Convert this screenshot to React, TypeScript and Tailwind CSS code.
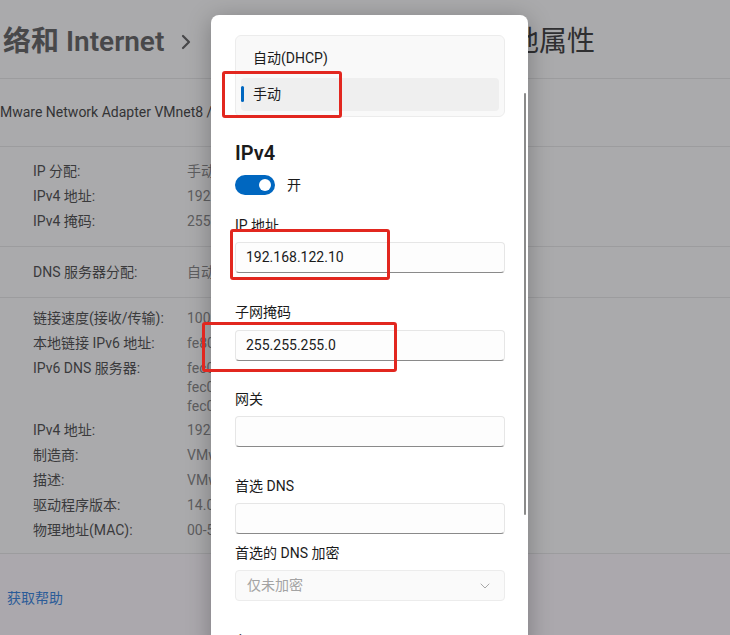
import React from "react";

const font = "font-['Roboto','Noto_Sans_CJK_SC',sans-serif]";

type Row = { label: string; values: string[] };

const sec1: Row[] = [
  { label: "IP 分配:", values: ["手动"] },
  { label: "IPv4 地址:", values: ["192.168.122.10"] },
  { label: "IPv4 掩码:", values: ["255.255.255.0"] },
];
const sec2: Row[] = [{ label: "DNS 服务器分配:", values: ["自动(DHCP)"] }];
const sec3: Row[] = [
  { label: "链接速度(接收/传输):", values: ["100/100 (Mbps)"] },
  { label: "本地链接 IPv6 地址:", values: ["fe80::b4c1:8f2e:1a7d:3c%18"] },
  { label: "IPv6 DNS 服务器:", values: ["fec0:0:0:ffff::1%1", "fec0:0:0:ffff::2%1", "fec0:0:0:ffff::3%1"] },
  { label: "IPv4 地址:", values: ["192.168.122.10"] },
  { label: "制造商:", values: ["VMware, Inc."] },
  { label: "描述:", values: ["VMware Virtual Ethernet Adapter for VMnet8"] },
  { label: "驱动程序版本:", values: ["14.0.0.8"] },
  { label: "物理地址(MAC):", values: ["00-50-56-C0-00-08"] },
];

function InfoRow({ r }: { r: Row }) {
  return (
    <div className="flex py-[3px] text-[14px]">
      <div className="w-[154px] pl-[33px] box-content shrink-0 leading-[19px] text-[#3a3a3c]">{r.label}</div>
      <div className="flex flex-col text-[#5e5e60] whitespace-nowrap">
        {r.values.map((v, i) => (
          <div key={i} className={i === 0 ? "leading-[19px]" : "leading-[18.5px]"}>
            {v}
          </div>
        ))}
      </div>
    </div>
  );
}

function Field({ label, value, top, gap }: { label: string; value?: string; top: string; gap: string }) {
  return (
    <>
      <div className={`${top} leading-[20px] text-[14px] text-[#1b1b1b]`}>{label}</div>
      <div
        className={`${gap} h-[31px] rounded-[4px] border border-[#e6e6e6] border-b-[#8a8a8a] bg-[#fdfdfd] flex items-center px-[10px] text-[14px] text-[#1b1b1b]`}
      >
        {value}
      </div>
    </>
  );
}

export default function App() {
  return (
    <div className={`relative w-[730px] h-[635px] overflow-hidden bg-[#aaaaac] ${font}`}>
      {/* background settings page */}
      <div className="flex flex-col">
        <div className="h-[78px] flex items-center pt-[6px] text-[28px] font-semibold text-[#48484a] whitespace-nowrap">
          <span className="pl-[3px]">络和 Internet</span>
          <svg className="ml-[16px]" width="12" height="16" viewBox="0 0 12 16">
            <path d="M3 2 L9 8 L3 14" fill="none" stroke="#48484a" strokeWidth="2.2" strokeLinecap="round" strokeLinejoin="round" />
          </svg>
          <span className="ml-auto mr-[135px] font-normal text-[#2f2f31]">本地属性</span>
        </div>
        <div className="h-px bg-[#9c9c9e]" />
        <div className="h-[67px] flex items-center text-[14px] text-[#333335] whitespace-nowrap">
          Mware Network Adapter VMnet8 / 本地连接
        </div>
        <div className="h-px bg-[#9c9c9e]" />
        <div className="pt-[12px] pb-[12px] flex flex-col">
          {sec1.map((r) => (
            <InfoRow key={r.label} r={r} />
          ))}
        </div>
        <div className="h-px bg-[#9c9c9e]" />
        <div className="h-[50px] flex flex-col justify-center">
          {sec2.map((r) => (
            <InfoRow key={r.label} r={r} />
          ))}
        </div>
        <div className="h-px bg-[#9c9c9e]" />
        <div className="pt-[8px] pb-[10px] flex flex-col">
          {sec3.map((r) => (
            <InfoRow key={r.label} r={r} />
          ))}
        </div>
        <div className="h-px bg-[#9c9c9e]" />
        <div className="h-[90px] bg-[#aba8ad] pl-[7px] pt-[34px] text-[14px] leading-[20px] text-[#2b5c98]">获取帮助</div>
      </div>

      {/* dialog */}
      <div className="absolute left-[211px] top-[15px] w-[317px] h-[640px] bg-white rounded-[8px] shadow-[0_4px_24px_rgba(0,0,0,0.28)] overflow-hidden">
        <div className="absolute left-[313px] top-[78px] w-[2px] h-[422px] rounded-full bg-[#8a8a8a]" />
        <div className="pl-[24px] pr-[23px] pt-[20px] flex flex-col">
          <div className="rounded-[6px] border border-[#ececec] bg-[#f9f9f9] p-[5px] flex flex-col gap-[4px]">
            <div className="h-[33px] flex items-center pl-[12px] pt-[2px] text-[14px] text-[#1b1b1b]">自动(DHCP)</div>
            <div className="relative h-[33px] flex items-center pl-[12px] rounded-[4px] bg-[#efefef] text-[14px] text-[#1b1b1b]">
              <div className="absolute left-0 top-[8px] w-[3px] h-[16px] rounded-full bg-[#0067c0]" />
              手动
            </div>
          </div>

          <div className="mt-[22px] text-[20px] leading-[28px] font-semibold text-[#1b1b1b]">IPv4</div>
          <div className="mt-[8px] flex items-center h-[20px]">
            <div className="w-[40px] h-[20px] rounded-full bg-[#0067c0] flex items-center justify-end pr-[4px]">
              <div className="w-[12px] h-[12px] rounded-full bg-white" />
            </div>
            <span className="ml-[12px] text-[14px] text-[#1b1b1b]">开</span>
          </div>

          <Field label="IP 地址" value="192.168.122.10" top="mt-[20px]" gap="mt-[7px]" />
          <Field label="子网掩码" value="255.255.255.0" top="mt-[29px]" gap="mt-[8px]" />
          <Field label="网关" top="mt-[28px]" gap="mt-[7px]" />
          <Field label="首选 DNS" top="mt-[29px]" gap="mt-[7px]" />

          <div className="mt-[9px] leading-[20px] text-[14px] text-[#1b1b1b]">首选的 DNS 加密</div>
          <div className="mt-[7px] h-[31px] rounded-[4px] border border-[#ececec] bg-[#fafafa] flex items-center justify-between pl-[11px] pr-[14px] text-[14px] text-[#a3a3a3]">
            <span>仅未加密</span>
            <svg width="10" height="6" viewBox="0 0 10 6">
              <path d="M1 1 L5 5 L9 1" fill="none" stroke="#a8a8a8" strokeWidth="1" strokeLinecap="round" strokeLinejoin="round" />
            </svg>
          </div>
          <div className="mt-[30px] leading-[20px] text-[14px] text-[#1b1b1b]">备用 DNS</div>
        </div>
      </div>

      {/* red annotation boxes */}
      <div className="absolute left-[222px] top-[71px] w-[120px] h-[47px] border-[3px] border-[#e2271f] rounded-[3px]" />
      <div className="absolute left-[230px] top-[229px] w-[160px] h-[51px] border-[3px] border-[#e2271f] rounded-[3px]" />
      <div className="absolute left-[202px] top-[322px] w-[195px] h-[50px] border-[3px] border-[#e2271f] rounded-[3px]" />
    </div>
  );
}
